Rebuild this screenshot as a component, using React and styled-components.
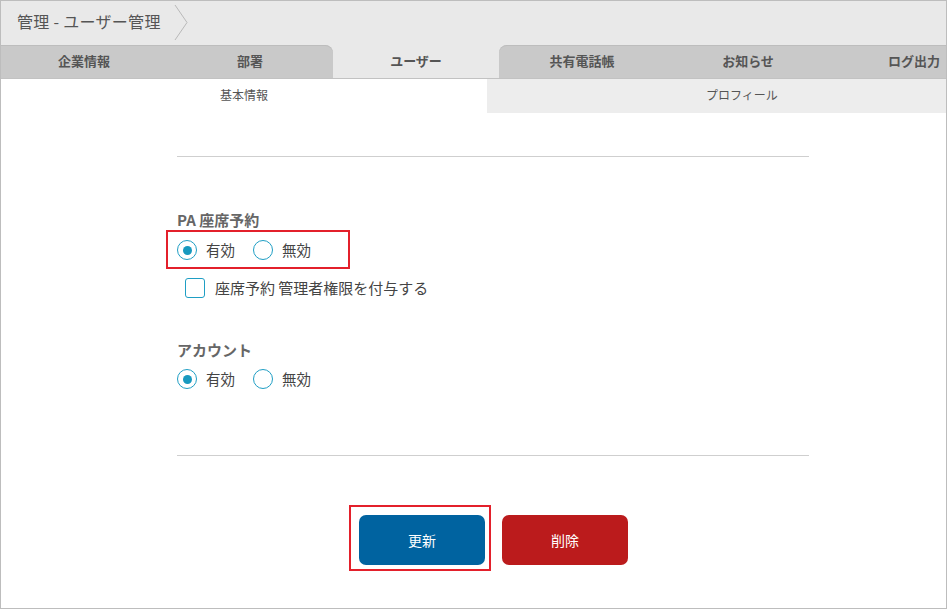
import React from 'react';
import styled, { createGlobalStyle } from 'styled-components';

const GlobalStyle = createGlobalStyle`
  html, body {
    margin: 0;
    padding: 0;
    background: #fff;
  }
  body {
    font-family: "Noto Sans CJK JP", "Noto Sans", "Liberation Sans", sans-serif;
  }
`;

const Frame = styled.div`
  width: 947px;
  height: 609px;
  box-sizing: border-box;
  border: 1px solid #bdbdbd;
  overflow: hidden;
  background: #fff;
`;

const Inner = styled.div`
  width: 996px;
`;

const Header = styled.div`
  height: 43px;
  box-sizing: border-box;
  background: #e9e9e9;
  display: flex;
  align-items: center;
  padding: 0 0 3px 16px;
`;

const Title = styled.div`
  font-size: 16px;
  line-height: 20px;
  color: #555;
  letter-spacing: 0.3px;
`;

const Crumb = styled.svg`
  margin-left: 13px;
  margin-top: 3px;
`;

const TabBar = styled.div`
  display: flex;
  background: #e9e9e9;
  padding-top: 1px;
  border-bottom: 1px solid #c2c2c2;
`;

const Tab = styled.div`
  width: 166px;
  height: 33px;
  box-sizing: border-box;
  display: flex;
  align-items: center;
  justify-content: center;
  padding-bottom: 2px;
  font-size: 13px;
  font-weight: bold;
  color: #555;
  border-radius: ${p => p.$radius};
  background: ${p => (p.$active ? '#e9e9e9' : '#c9c9c9')};
  box-shadow: ${p => (p.$active ? 'none' : 'inset 0 1px 0 #bdbdbd')};
`;

const SubTabs = styled.div`
  display: flex;
  height: 34px;
`;

const SubTab = styled.div`
  width: ${p => p.$w}px;
  display: flex;
  align-items: center;
  justify-content: center;
  padding-bottom: 3px;
  box-sizing: border-box;
  font-size: 12px;
  color: #555;
  background: ${p => (p.$active ? '#fff' : '#ededed')};
`;

const Form = styled.div`
  margin-left: 176px;
  width: 632px;
  display: flex;
  flex-direction: column;
  align-items: flex-start;
`;

const Rule = styled.div`
  align-self: stretch;
  height: 1px;
  background: #cfcfcf;
  margin-top: ${p => p.$mt}px;
`;

const SectionLabel = styled.div`
  margin-top: ${p => p.$mt}px;
  height: 20px;
  line-height: 20px;
  font-size: 15px;
  font-weight: bold;
  color: #666;
`;

const Highlight = styled.div`
  display: flex;
  border: 2px solid #e3202b;
  padding: ${p => p.$pad};
  margin-left: ${p => p.$ml}px;
`;

const RadioRow = styled.div`
  display: flex;
  align-items: center;
  height: 20px;
  margin-top: ${p => p.$mt || 0}px;
  margin-left: ${p => p.$ml || 0}px;
`;

const RadioCircle = styled.span`
  width: 20px;
  height: 20px;
  box-sizing: border-box;
  border: 1.5px solid #1f9ec4;
  border-radius: 50%;
  display: flex;
  align-items: center;
  justify-content: center;
  background: #fff;
  &::after {
    content: '';
    width: 9px;
    height: 9px;
    border-radius: 50%;
    background: ${p => (p.$checked ? '#1799bf' : 'transparent')};
  }
`;

const OptionLabel = styled.span`
  font-size: ${p => p.$size || 14.5}px;
  line-height: 20px;
  color: #444;
  margin-left: ${p => p.$ml || 9}px;
  margin-right: ${p => p.$mr || 0}px;
`;

const CheckBox = styled.span`
  width: 20px;
  height: 20px;
  box-sizing: border-box;
  border: 1.5px solid #1f9ec4;
  border-radius: 3px;
  background: #fff;
`;

const Buttons = styled.div`
  display: flex;
  align-items: flex-start;
  margin-left: 172px;
  margin-top: 49px;
`;

const Button = styled.button`
  width: 126px;
  height: 50px;
  border: none;
  border-radius: 7px;
  font-family: inherit;
  font-size: 14px;
  color: #fff;
  background: ${p => (p.$danger ? '#bb1b1c' : '#0063a0')};
  margin-top: ${p => p.$mt || 0}px;
  margin-left: ${p => p.$ml || 0}px;
  cursor: pointer;
`;

const BtnHighlight = styled.div`
  border: 2px solid #e3202b;
  padding: 8px 4px 4px 8px;
`;

function Radio({ checked, label, mr }) {
  return (
    <>
      <RadioCircle $checked={checked} />
      <OptionLabel $mr={mr}>{label}</OptionLabel>
    </>
  );
}

const tabs = ['企業情報', '部署', 'ユーザー', '共有電話帳', 'お知らせ', 'ログ出力'];
const activeTab = 2;

function tabRadius(i) {
  if (i === activeTab) return '8px 8px 0 0';
  if (i === activeTab - 1) return '0 8px 0 0';
  if (i === activeTab + 1) return '8px 0 0 0';
  return '0';
}

export default function App() {
  return (
    <>
      <GlobalStyle />
      <Frame>
        <Inner>
          <Header>
            <Title>管理 - ユーザー管理</Title>
            <Crumb width="14" height="37" viewBox="0 0 14 37">
              <polyline points="1,1 13,18.5 1,36" fill="none" stroke="#b9b9b9" strokeWidth="1" />
            </Crumb>
          </Header>
          <TabBar>
            {tabs.map((t, i) => (
              <Tab key={t} $active={i === activeTab} $radius={tabRadius(i)}>{t}</Tab>
            ))}
          </TabBar>
          <SubTabs>
            <SubTab $w={486} $active>基本情報</SubTab>
            <SubTab $w={510}>プロフィール</SubTab>
          </SubTabs>
          <Form>
            <Rule $mt={43} />
            <SectionLabel $mt={53}>PA 座席予約</SectionLabel>
            <Highlight $pad="8px 37px 7px 9px" $ml={-11}>
              <RadioRow>
                <Radio checked label="有効" mr={18} />
                <Radio label="無効" />
              </RadioRow>
            </Highlight>
            <RadioRow $mt={9} $ml={8}>
              <CheckBox />
              <OptionLabel $ml={10} $size={15}>座席予約 管理者権限を付与する</OptionLabel>
            </RadioRow>
            <SectionLabel $mt={42}>アカウント</SectionLabel>
            <RadioRow $mt={9}>
              <Radio checked label="有効" mr={18} />
              <Radio label="無効" />
            </RadioRow>
            <Rule $mt={66} />
            <Buttons>
              <BtnHighlight>
                <Button>更新</Button>
              </BtnHighlight>
              <Button $danger $mt={10} $ml={11}>削除</Button>
            </Buttons>
          </Form>
        </Inner>
      </Frame>
    </>
  );
}
